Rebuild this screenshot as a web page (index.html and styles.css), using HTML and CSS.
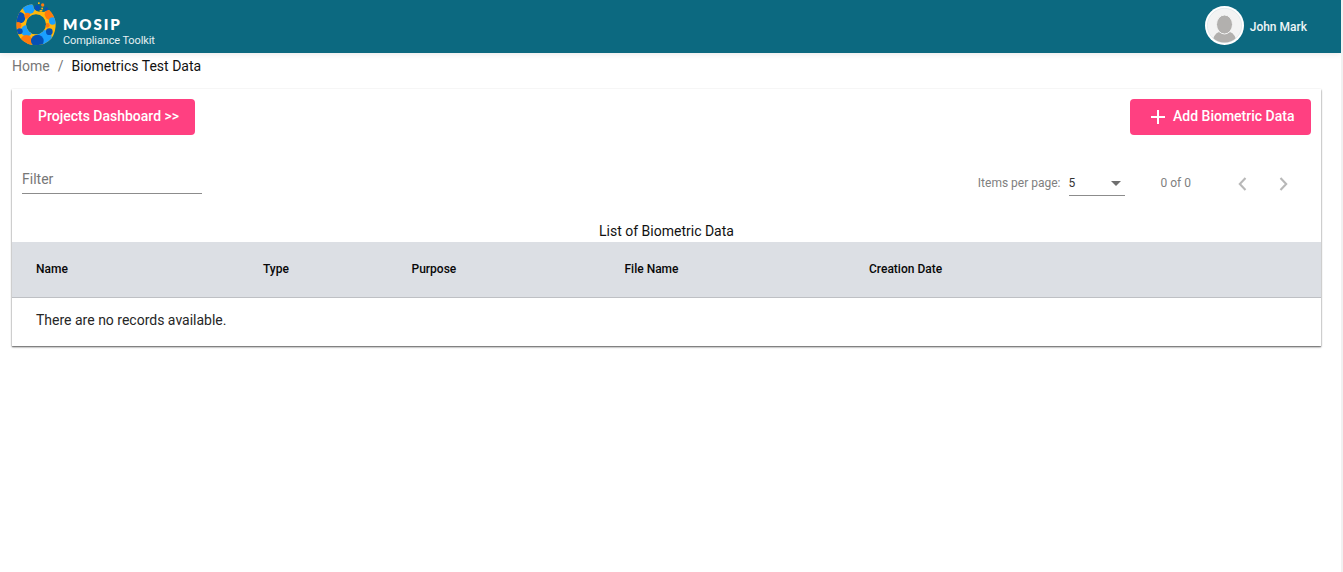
FILE: index.html
```html
<!DOCTYPE html>
<html lang="en">
<head>
<meta charset="utf-8">
<title>MOSIP Compliance Toolkit</title>
<link rel="stylesheet" href="styles.css">
</head>
<body>
<div class="page">
  <header class="toolbar">
    <div class="brand">
      <svg class="logo" width="50" height="50" viewBox="0 0 150 150">
        <defs><clipPath id="ring"><path clip-rule="evenodd" d="M66 13Q70 14 71 24Q76 35 92 35Q103 38 108 33Q111 27 118 31Q134 47 137 70Q138 96 125 115Q106 136 78 136Q50 136 31 115Q19 99 19 75Q19 47 34 29Q49 14 66 13ZM78 43A30 30 0 1 0 78 103A30 30 0 1 0 78 43Z"/></clipPath></defs>
        <g clip-path="url(#ring)">
          <rect width="150" height="150" fill="#ffb80c"/>
          <circle cx="57" cy="24" r="18" fill="#1a9fff"/>
          <circle cx="121" cy="43" r="17" fill="#ff7a0d"/>
          <circle cx="29" cy="53" r="17" fill="#0650b5"/>
          <circle cx="52" cy="47" r="9" fill="#ff7a0d"/>
          <circle cx="128" cy="63" r="11" fill="#1a9fff"/>
          <circle cx="112" cy="76" r="7" fill="#ff7a0d"/>
          <circle cx="24" cy="76" r="10" fill="#ff7a0d"/>
          <circle cx="50" cy="92" r="17" fill="#1a9fff"/>
          <circle cx="29" cy="94" r="9" fill="#0650b5"/>
          <circle cx="103" cy="112" r="22" fill="#1a9fff"/>
          <circle cx="118" cy="95" r="10" fill="#0650b5"/>
          <circle cx="49" cy="123" r="18" fill="#ff7a0d"/>
          <circle cx="82" cy="123" r="19" fill="#0650b5"/>
        </g>
        <circle cx="82" cy="23" r="8" fill="#0650b5"/>
        <circle cx="98" cy="15" r="5" fill="#ff7a0d"/>
        <circle cx="109" cy="27" r="5" fill="#0650b5"/>
        <rect x="84" y="7" width="5" height="5" fill="#ffb80c"/>
        <rect x="94" y="23" width="5" height="5" fill="#ffb80c"/>
        <rect x="89" y="30" width="8" height="5" fill="#ffb80c"/>
      </svg>
      <div class="brand-text">
        <div class="brand-name">MOSIP</div>
        <div class="brand-sub">Compliance Toolkit</div>
      </div>
    </div>
    <div class="user">
      <svg class="avatar" width="39" height="39" viewBox="0 0 39 39">
        <defs><clipPath id="face"><circle cx="19.5" cy="19.5" r="17"/></clipPath></defs>
        <circle cx="19.5" cy="19.5" r="19.5" fill="#fff"/>
        <circle cx="19.5" cy="19.5" r="17.2" fill="#f3f3f3" stroke="#d5e1e4" stroke-width=".6"/>
        <g clip-path="url(#face)" fill="#b2b0ae">
          <path d="M7 39Q8 28 14 26Q19.500 29 25 26Q31 28 32 39Z"/>
          <ellipse cx="19.500" cy="18.500" rx="8" ry="9.500" stroke="#f3f3f3" stroke-width="1"/>
        </g>
      </svg>
      <span class="user-name">John Mark</span>
    </div>
  </header>
  <nav class="crumbs"><span class="muted">Home</span><span class="slash">/</span><span>Biometrics Test Data</span></nav>
  <main class="card">
    <div class="actions">
      <button class="btn btn-projects"><span>Projects Dashboard &gt;&gt;</span></button>
      <button class="btn btn-add"><svg width="14" height="14" viewBox="0 0 14 14"><path d="M7 0V14M0 7H14" stroke="#fff" stroke-width="2"/></svg><span>Add Biometric Data</span></button>
    </div>
    <div class="tools">
      <div class="filter">Filter</div>
      <div class="pager">
        <span>Items per page:</span>
        <div class="select"><span>5</span><svg width="10" height="5" viewBox="0 0 10 5"><path d="M0 0H10L5 5Z" fill="#6f6f6f"/></svg></div>
        <span class="range">0 of 0</span>
        <svg class="prev" width="9" height="14" viewBox="0 0 9 14"><path d="M7.500 1L1.800 7L7.500 13" fill="none" stroke="#b8b8b8" stroke-width="2.100"/></svg>
        <svg class="next" width="9" height="14" viewBox="0 0 9 14"><path d="M1.500 1L7.200 7L1.500 13" fill="none" stroke="#b8b8b8" stroke-width="2.100"/></svg>
      </div>
    </div>
    <div class="caption"><span>List of Biometric Data</span></div>
    <div class="thead"><span>Name</span><span>Type</span><span>Purpose</span><span>File Name</span><span>Creation Date</span></div>
    <div class="empty"><span>There are no records available.</span></div>
  </main>
</div>
</body>
</html>
```
FILE: styles.css
```css
* { box-sizing: border-box; }
body { margin: 0; background: #f1f1f1; font-family: Roboto, "Liberation Sans", sans-serif; font-size: 14px; color: #212121; }
svg { display: block; flex: none; }
span { white-space: nowrap; }
.page { width: 1341px; height: 572px; background: #fff; overflow: hidden; }
.toolbar { height: 53px; background: #0c6980; color: #fff; display: flex; justify-content: space-between; padding: 0 34px 0 10px; box-shadow: 0 1px 6px rgba(0,0,0,.09); }
.brand { display: flex; gap: 3px; }
.brand-text { padding-top: 14px; }
.brand-name { font: 800 15px/20px Lato, sans-serif; letter-spacing: 1.9px; height: 20px; }
.brand-sub { font-size: 11px; line-height: 14px; letter-spacing: -.12px; color: #e5f0f2; white-space: nowrap; }
.user { display: flex; align-items: center; gap: 6px; height: 51px; }
.user-name { font-size: 12px; font-weight: 500; color: #eef6f7; padding-top: 2px; }
.crumbs { height: 36px; padding: 4px 12px 0; line-height: 18px; display: flex; color: #111; }
.muted { color: #777; }
.slash { color: #777; margin: 0 8px; }
.card { width: 1309px; height: 257px; margin-left: 12px; background: #fff; box-shadow: 0 1px 2px rgba(0,0,0,.48), 0 1px 1px rgba(0,0,0,.25); }
.actions { display: flex; justify-content: space-between; padding: 10px 10px 0; height: 74px; }
.btn { height: 36px; border: 0; border-radius: 4px; background: #ff4081; color: #fff; font: 500 14px/34px Roboto, sans-serif; padding: 0 16px; display: flex; align-items: center; }
.btn span { height: 36px; }
.btn-projects { width: 173px; }
.btn-add { width: 181px; padding-left: 21px; gap: 8px; }
.tools { display: flex; justify-content: space-between; padding: 0 34px 0 10px; height: 59px; }
.filter { width: 180px; height: 31px; line-height: 33px; color: #777; border-bottom: 1px solid #8c8c8c; }
.pager { display: flex; height: 44px; line-height: 40px; font-size: 12px; color: #808080; }
.select { width: 56px; height: 33px; margin-left: 8px; border-bottom: 1px solid #8c8c8c; color: #333; display: flex; justify-content: space-between; padding-right: 4px; }
.select svg { margin-top: 18px; }
.range { margin-left: 36px; }
.prev { margin: 14px 0 0 47px; }
.next { margin: 14px 0 0 32px; }
.next { margin-right: -1px; }
.caption { height: 20px; line-height: 18px; text-align: center; color: #111; }
.thead { height: 56px; line-height: 54px; background: #dcdfe4; border-bottom: 1px solid #bec0c4; font-size: 12px; font-weight: 500; color: #080808; display: grid; grid-template-columns: 227px 148.500px 213px 244.500px 1fr; padding-left: 24px; }
.empty { padding-left: 24px; line-height: 45px; color: #262626; }
```
